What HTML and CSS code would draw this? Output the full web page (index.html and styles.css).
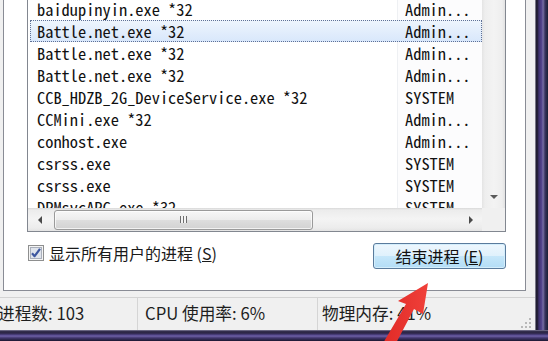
FILE: index.html
```html
<!DOCTYPE html>
<html>
<head>
<meta charset="utf-8">
<link rel="stylesheet" href="styles.css">
</head>
<body>
<div class="frame">
  <div class="window">
    <div class="tabpage">
      <div class="listbox">
        <div class="rows-viewport">
          <div class="rows">
            <div class="row first"><span class="name">baidupinyin.exe *32</span><span class="user">Admin...</span></div>
            <div class="row selected"><span class="name">Battle.net.exe *32</span><span class="user">Admin...</span></div>
            <div class="row"><span class="name">Battle.net.exe *32</span><span class="user">Admin...</span></div>
            <div class="row"><span class="name">Battle.net.exe *32</span><span class="user">Admin...</span></div>
            <div class="row"><span class="name">CCB_HDZB_2G_DeviceService.exe *32</span><span class="user">SYSTEM</span></div>
            <div class="row"><span class="name">CCMini.exe *32</span><span class="user">Admin...</span></div>
            <div class="row"><span class="name">conhost.exe</span><span class="user">Admin...</span></div>
            <div class="row"><span class="name">csrss.exe</span><span class="user">SYSTEM</span></div>
            <div class="row"><span class="name">csrss.exe</span><span class="user">SYSTEM</span></div>
            <div class="row"><span class="name">DPMsvcAPC.exe *32</span><span class="user">SYSTEM</span></div>
          </div>
        </div>
        <div class="vscroll">
          <div class="sbtn"><span class="tri-down"></span></div>
        </div>
        <div class="hscroll">
          <div class="sbtn"><span class="tri-left"></span></div>
          <div class="thumb"><span class="grip"></span></div>
          <div class="track"></div>
          <div class="sbtn"><span class="tri-right"></span></div>
        </div>
        <div class="corner"></div>
      </div>
      <div class="controls">
        <label class="check">
          <svg class="box" width="16" height="16" viewBox="0 0 16 16">
            <rect x="0.5" y="0.5" width="15" height="15" fill="#f4f4f4" stroke="#8e8f8f"/>
            <rect x="2.5" y="2.5" width="11" height="11" fill="#dfe4ec" stroke="#aab0bc"/>
            <path d="M4 8.2 L6.6 11.2 L12 3.8" fill="none" stroke="#3d57a0" stroke-width="2.2" stroke-linejoin="round"/>
          </svg>
          <span>显示所有用户的进程 (<u>S</u>)</span>
        </label>
        <button class="endbtn">结束进程 (<u>E</u>)</button>
      </div>
    </div>
    <div class="statusbar">
      <div class="panel p1">进程数: 103</div>
      <div class="panel p2">CPU 使用率: 6%</div>
      <div class="panel p3">物理内存: 41%</div>
      <svg class="gripper" width="10" height="10" viewBox="0 0 10 10">
        <g fill="#b9b9b9">
          <rect x="8" y="0" width="2" height="2"/>
          <rect x="4" y="4" width="2" height="2"/><rect x="8" y="4" width="2" height="2"/>
          <rect x="0" y="8" width="2" height="2"/><rect x="4" y="8" width="2" height="2"/><rect x="8" y="8" width="2" height="2"/>
        </g>
      </svg>
    </div>
  </div>
  <svg class="arrow" width="548" height="341" viewBox="0 0 548 341">
    <defs>
      <linearGradient id="ag" x1="0" y1="0" x2="1" y2="0">
        <stop offset="0" stop-color="#e02a26"/>
        <stop offset="1" stop-color="#f0403a"/>
      </linearGradient>
    </defs>
    <polygon fill="url(#ag)" points="428,283 423,314 414,309 395,345 382,345 406,304 398,301"/>
  </svg>
</div>
</body>
</html>
```
FILE: styles.css
```css
* { box-sizing: border-box; margin: 0; padding: 0; }
html, body { width: 548px; height: 341px; overflow: hidden; }
body { background: #1f1b33; font-family: "Noto Sans CJK SC", "Noto Sans", sans-serif; color: #000; }

.frame {
  position: relative;
  width: 548px;
  height: 341px;
  padding: 0 13px 11px 0;
  background:
    linear-gradient(to bottom, #9a96b2 0, #35304f 1px, #2b2445 3px, #4f4286 5px, #6f62a8 6px, #40356c 8px, #1c1830 11px) left bottom / 100% 11px no-repeat,
    linear-gradient(to right, #c9c9d2 0, #25213a 1px, #1b1828 2px, #3e3170 4px, #574891 7px, #7a72a6 8px, #3a3460 10px, #1a2035 13px) right top / 13px 100% no-repeat;
}

.window {
  width: 535px;
  height: 330px;
  background: #f0f0f0;
  display: flex;
  flex-direction: column;
}

.tabpage {
  margin-left: 3px;
  width: 523px;
  height: 291px;
  background: #fff;
  border: 1px solid #898c95;
  border-top: 0;
  padding-left: 23px;
  display: flex;
  flex-direction: column;
}

.listbox {
  width: 479px;
  height: 232px;
  border: 1px solid #828790;
  border-top: 0;
  display: grid;
  grid-template-columns: 454px 23px;
  grid-template-rows: 208px 23px;
}

.rows-viewport {
  overflow: hidden;
  background: linear-gradient(to right, #fff 369px, #eef0f3 369px, #eef0f3 370px, #fcfcfd 370px);
}
.rows { padding-left: 2px; }
.row {
  display: grid;
  grid-template-columns: 367px 1fr;
  height: 22px;
  line-height: 22px;
  font-family: "Noto Sans Mono CJK SC", "Liberation Mono", monospace;
  font-size: 16.4px;
  white-space: nowrap;
  color: #111;
}
.row.first { height: 20px; line-height: 18px; }
.row .name { padding-left: 7px; }
.row .user { padding-left: 8px; }
.row.selected {
  background: linear-gradient(#eef5fd, #d8e7fb);
  outline: 1px dotted #5f7196;
  outline-offset: -1px;
}

.vscroll {
  background: linear-gradient(to right, #e4e4e4 0, #eeeeee 3px, #f3f3f3 12px, #eeeeee 20px, #e2e2e2 23px);
  display: flex;
  flex-direction: column;
  justify-content: flex-end;
}
.sbtn {
  width: 23px;
  height: 23px;
  display: flex;
  align-items: center;
  justify-content: center;
  flex: none;
}
.tri-down { width: 0; height: 0; border-left: 4px solid transparent; border-right: 4px solid transparent; border-top: 4px solid #5a5a5a; }
.tri-left { width: 0; height: 0; border-top: 4px solid transparent; border-bottom: 4px solid transparent; border-right: 4px solid #4a4a4a; }
.tri-right { width: 0; height: 0; border-top: 4px solid transparent; border-bottom: 4px solid transparent; border-left: 4px solid #4a4a4a; }

.hscroll {
  display: flex;
  align-items: center;
  background: linear-gradient(to bottom, #d9d9d9 0, #ececec 2px, #f4f4f4 11px, #ececec 20px, #e3e3e3 23px);
}
.thumb {
  margin-left: 3px;
  width: 259px;
  height: 20px;
  border: 1px solid #9a9a9a;
  border-radius: 3px;
  background: linear-gradient(#f7f7f7, #ececec 50%, #dedede 50%, #d2d2d2);
  box-shadow: inset 0 0 0 1px rgba(255,255,255,0.7);
  display: flex;
  align-items: center;
  justify-content: center;
}
.grip {
  width: 7px;
  height: 7px;
  background: repeating-linear-gradient(to right, #6e6e6e 0, #6e6e6e 1px, #f4f4f4 1px, #f4f4f4 3px);
}
.track { flex: 1; }
.corner { background: #f0f0f0; }

.controls {
  width: 479px;
  margin-top: 11px;
  display: flex;
  justify-content: space-between;
  align-items: flex-start;
}
.check {
  display: flex;
  align-items: center;
  gap: 5px;
  padding-left: 1px;
  margin-top: 1px;
  font-size: 16px;
  line-height: 18px;
  color: #1a1a1a;
}
.check .box { flex: none; }
.endbtn {
  width: 133px;
  height: 26px;
  border: 1px solid #5a7b9c;
  border-radius: 3px;
  background: linear-gradient(#eef7fd 0, #dff1fc 50%, #c6e7fa 50%, #b3ddf6 100%);
  box-shadow: inset 0 0 0 1px #d4eefc;
  font-family: "Noto Sans CJK SC", sans-serif;
  font-size: 16px;
  line-height: 22px;
  color: #111;
}

.statusbar {
  position: relative;
  margin-top: 6px;
  height: 33px;
  border-top: 1px solid #d3d3d3;
  display: flex;
  font-size: 16.7px;
  line-height: 31px;
  color: #1e1e1e;
  white-space: nowrap;
}
.panel { height: 100%; }
.p1 { width: 138px; border-right: 1px solid #d5d5d5; text-indent: -2px; }
.p2 { width: 180px; border-right: 1px solid #d5d5d5; padding-left: 7px; }
.p3 { flex: 1; padding-left: 4px; }
.gripper { position: absolute; right: 4px; bottom: 2px; }

.arrow { position: absolute; left: 0; top: 0; pointer-events: none; }
```
